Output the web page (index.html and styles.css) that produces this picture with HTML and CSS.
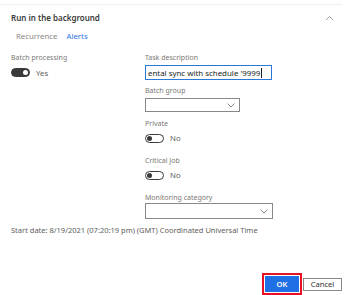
FILE: index.html
```html
<!DOCTYPE html>
<html lang="en">

<head>
  <meta charset="UTF-8" />
  <meta name="viewport" content="width=device-width, initial-scale=1.0" />
  <title>Run in the background</title>
  <link rel="stylesheet" href="styles.css">
</head>

<body>
  <div class="panel">
    <!-- Section header -->
    <div class="sectionHead">
      <span class="sectionTitle">Run in the background</span>
      <svg class="chevron" width="9" height="6" viewBox="0 0 9 6">
        <path d="M1 5 L4.5 1.5 L8 5" fill="none" stroke="#a19f9d" stroke-width="1" />
      </svg>
    </div>

    <div class="tabs">
      <span class="tab">Recurrence</span>
      <span class="tab active">Alerts</span>
    </div>

    <div class="fields">
      <!-- Left column -->
      <div class="col">
        <div class="field">
          <label class="lbl">Batch processing</label>
          <div class="toggleRow tall">
            <span class="toggle on"><span class="knob"></span></span>
            <span class="toggleText">Yes</span>
          </div>
        </div>
      </div>

      <!-- Right column -->
      <div class="col">
        <div class="field first">
          <label class="lbl">Task description</label>
          <div class="textInput">ental sync with schedule '9999<span class="caret"></span></div>
        </div>

        <div class="field">
          <label class="lbl">Batch group</label>
          <div class="select short">
            <svg width="8" height="5" viewBox="0 0 8 5">
              <path d="M0.5 0.5 L4 4 L7.5 0.5" fill="none" stroke="#8a8886" stroke-width="1" />
            </svg>
          </div>
        </div>

        <div class="field toggleField">
          <label class="lbl">Private</label>
          <div class="toggleRow">
            <span class="toggle"><span class="knob"></span></span>
            <span class="toggleText">No</span>
          </div>
        </div>

        <div class="field toggleField">
          <label class="lbl">Critical Job</label>
          <div class="toggleRow">
            <span class="toggle"><span class="knob"></span></span>
            <span class="toggleText">No</span>
          </div>
        </div>

        <div class="field last">
          <label class="lbl tight">Monitoring category</label>
          <div class="select wide">
            <svg width="8" height="5" viewBox="0 0 8 5">
              <path d="M0.5 0.5 L4 4 L7.5 0.5" fill="none" stroke="#8a8886" stroke-width="1" />
            </svg>
          </div>
        </div>
      </div>
    </div>

    <p class="startDate">Start date: 8/19/2021 (07:20:19 pm) (GMT) Coordinated Universal Time</p>

    <div class="actions">
      <span class="highlight"><button class="btnOk">OK</button></span>
      <button class="btnCancel">Cancel</button>
    </div>
  </div>
</body>

</html>
```

FILE: styles.css
```css
body {
  margin: 0;
  background-color: #ffffff;
  font-family: "Noto Sans", "Open Sans", sans-serif;
  color: #323130;
}

.panel {
  width: 357px;
  height: 295px;
  position: relative;
}

.sectionHead {
  margin-top: 4px;
  width: 342px;
  border-top: 1px solid #f0efee;
  display: flex;
  justify-content: space-between;
  align-items: center;
  padding: 6px 0 0 11px;
  box-sizing: border-box;
  height: 20px;
}

.sectionTitle {
  font-size: 8px;
  font-weight: 600;
  color: #3b3a39;
}

.chevron {
  margin-right: 8px;
}

.tabs {
  display: flex;
  gap: 9px;
  padding: 7px 0 0 16px;
  height: 13px;
}

.tab {
  font-size: 7.8px;
  color: #8a8886;
}

.tab.active {
  color: #2a72e0;
}

.fields {
  display: flex;
  padding-left: 11px;
  margin-top: 9px;
}

.col {
  display: flex;
  flex-direction: column;
}

.col:first-child {
  width: 134px;
}

.field {
  display: flex;
  flex-direction: column;
  margin-bottom: 7px;
}

.field.first {
  margin-bottom: 6px;
}

.field.toggleField {
  margin-bottom: 11px;
}

.field.last {
  margin-bottom: 0;
}

.lbl {
  font-size: 7px;
  font-weight: 400;
  color: #7a7876;
  line-height: 10px;
  height: 10px;
  margin-bottom: 2px;
  white-space: nowrap;
}

.lbl.tight {
  margin-bottom: 0;
}

.textInput {
  width: 127px;
  height: 15px;
  box-sizing: border-box;
  border: 1px solid #2b78d6;
  font-size: 7.9px;
  padding-left: 2px;
  color: #201f1e;
  white-space: nowrap;
  overflow: hidden;
  display: flex;
  align-items: center;
}

.caret {
  display: inline-block;
  width: 1px;
  height: 10px;
  background-color: #201f1e;
  margin-left: 1px;
}

.select {
  height: 14px;
  box-sizing: border-box;
  border: 1px solid #8a8886;
  display: flex;
  justify-content: flex-end;
  align-items: center;
  padding-right: 4px;
}

.select.short {
  width: 95px;
}

.select.wide {
  width: 128px;
  height: 16px;
}

.toggleRow {
  display: flex;
  align-items: center;
  height: 14px;
}

.toggleRow.tall {
  height: 15px;
}

.toggle {
  width: 19px;
  height: 9px;
  border-radius: 5px;
  border: 1px solid #3b3a39;
  box-sizing: border-box;
  background-color: #ffffff;
  display: flex;
  align-items: center;
  padding: 0 1px;
}

.toggle .knob {
  width: 5px;
  height: 5px;
  border-radius: 50%;
  background-color: #3b3a39;
}

.toggle.on {
  background-color: #3b3a39;
  justify-content: flex-end;
}

.toggle.on .knob {
  background-color: #ffffff;
}

.toggleText {
  font-size: 7.8px;
  color: #605e5c;
  margin-left: 6px;
}

.startDate {
  margin: 6px 0 0;
  padding-left: 11px;
  font-size: 7.5px;
  color: #605e5c;
  line-height: 10px;
}

.actions {
  position: absolute;
  right: 15px;
  top: 269px;
  display: flex;
  align-items: center;
  gap: 1px;
}

.highlight {
  border: 2px solid #e81123;
  padding: 1px;
  display: flex;
}

.btnOk {
  display: block;
  width: 34px;
  height: 16px;
  border: none;
  background-color: #1f6fe5;
  color: #ffffff;
  font-family: "Noto Sans", sans-serif;
  font-size: 7.6px;
  font-weight: 600;
  line-height: 16px;
  padding: 0;
}

.btnCancel {
  display: block;
  width: 39px;
  height: 13px;
  border: 1px solid #8a8886;
  background-color: #ffffff;
  color: #323130;
  font-family: "Noto Sans", sans-serif;
  font-size: 7.6px;
  line-height: 11px;
  padding: 0;
}
```
